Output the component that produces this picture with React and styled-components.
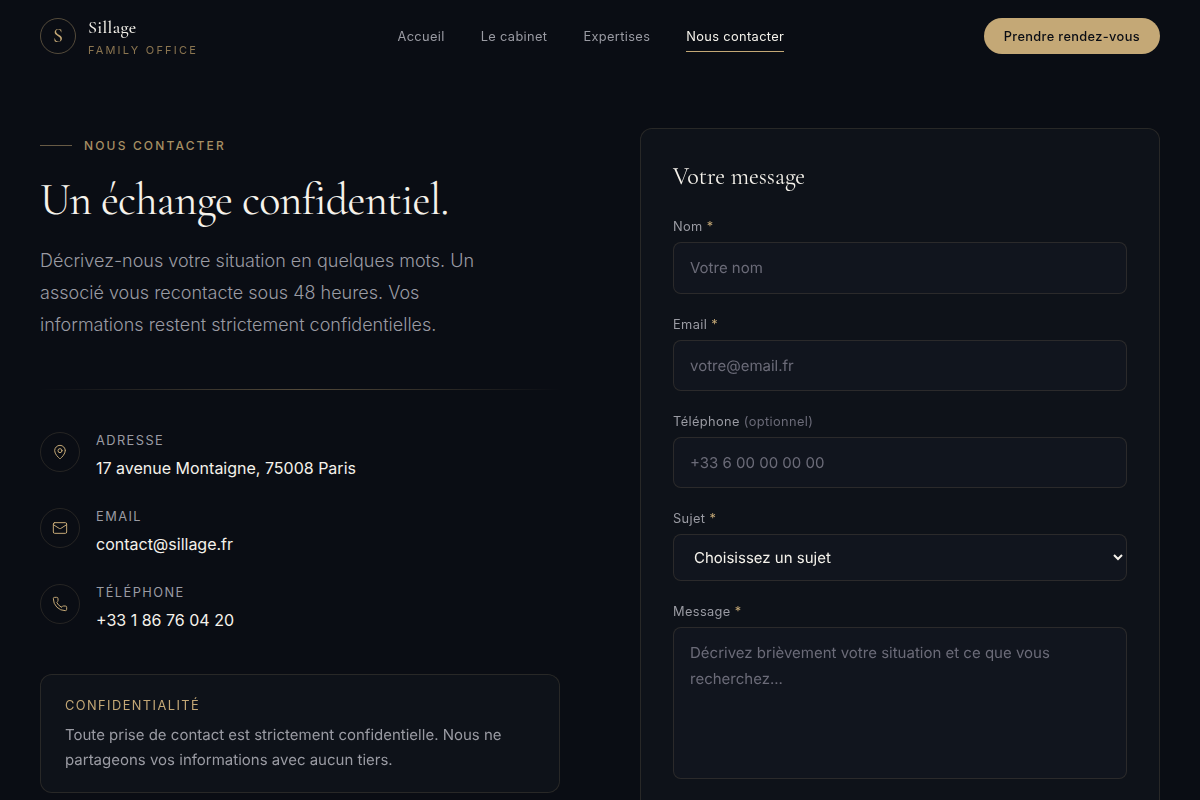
import React from 'react';
import styled, { createGlobalStyle } from 'styled-components';
import { MapPin, Mail, Phone } from 'lucide-react';

const serif = '"Cormorant Garamond", "Liberation Serif", serif';
const sans = 'Inter, "Liberation Sans", sans-serif';
const gold = '#c4a876';

const GlobalStyle = createGlobalStyle`
  *, *::before, *::after { box-sizing: border-box; }
  html { background: #0a0d14; }
  body {
    margin: 0;
    height: 800px;
    overflow: hidden;
    background: #0a0d14;
    color: #f5f2eb;
    font-family: ${sans};
    font-size: 16px;
    line-height: 1.7;
  }
  h1, h2, p { margin: 0; font-weight: 400; }
  a { color: inherit; text-decoration: none; }
`;

const Page = styled.div`
  height: 800px;
  overflow: hidden;
`;

const Header = styled.header`
  display: flex;
  align-items: center;
  justify-content: space-between;
  height: 72px;
  padding: 0 40px;
  will-change: transform;
`;

const Brand = styled.a`
  display: flex;
  align-items: center;
  gap: 12px;
`;

const Monogram = styled.span`
  display: flex;
  align-items: center;
  justify-content: center;
  width: 36px;
  height: 36px;
  border: 1px solid rgba(196, 168, 118, 0.4);
  border-radius: 50%;
  color: ${gold};
  font: 500 20px/1 ${serif};
`;

const BrandText = styled.span`
  display: flex;
  flex-direction: column;
  padding-top: 3px;
`;

const BrandName = styled.span`
  font: 500 18px/22px ${serif};
  letter-spacing: 0.36px;
`;

const BrandTag = styled.span`
  margin-top: 3px;
  color: #8b7550;
  font-size: 11px;
  line-height: 19px;
  letter-spacing: 2.2px;
  text-transform: uppercase;
`;

const Nav = styled.nav`
  display: flex;
  gap: 36px;
`;

const NavLink = styled.a`
  padding: 5px 0 3px;
  border-bottom: 1px solid ${(p) => (p.$active ? gold : 'transparent')};
  color: ${(p) => (p.$active ? '#f5f2eb' : '#9a9ba3')};
  font-size: 12.8px;
  line-height: 22px;
  letter-spacing: 0.365px;
`;

const BookButton = styled.a`
  display: flex;
  align-items: center;
  height: 36px;
  padding: 2px 20px 0;
  border-radius: 18px;
  background: ${gold};
  color: #0a0d14;
  font-size: 12.8px;
  font-weight: 500;
  letter-spacing: 0.365px;
`;

const Main = styled.main`
  display: grid;
  grid-template-columns: 1fr 1fr;
  gap: 80px;
  align-items: start;
  padding: 56px 40px 80px;
`;

const Intro = styled.section`
  display: flex;
  flex-direction: column;
  padding-top: 7px;
`;

const Eyebrow = styled.div`
  display: flex;
  align-items: center;
  gap: 12px;
  color: #a68f63;
  font-size: 12px;
  font-weight: 500;
  line-height: 21px;
  letter-spacing: 2.16px;
  text-transform: uppercase;

  &::before {
    content: '';
    width: 32px;
    height: 1px;
    background: ${gold};
    opacity: 0.5;
  }
`;

const Title = styled.h1`
  margin-top: 16px;
  font: 400 44px/56px ${serif};
  letter-spacing: -0.66px;
  white-space: nowrap;
`;

const Lead = styled.p`
  max-width: 460px;
  margin-top: 17px;
  color: #9a9ba3;
  font-size: 18px;
  font-weight: 300;
  line-height: 32px;
`;

const Divider = styled.div`
  height: 1px;
  margin: 48px 0 40px;
  background: linear-gradient(90deg, transparent, rgba(196, 168, 118, 0.4), transparent);
`;

const Contacts = styled.div`
  display: flex;
  flex-direction: column;
  gap: 24px;
`;

const ContactRow = styled.div`
  display: flex;
  gap: 16px;
  height: 52px;
`;

const ContactIcon = styled.span`
  display: flex;
  align-items: center;
  justify-content: center;
  width: 40px;
  height: 40px;
  margin-top: 2px;
  border: 1px solid rgba(196, 168, 118, 0.15);
  border-radius: 50%;
  color: ${gold};
`;

const ContactLabel = styled.div`
  margin-bottom: 4px;
  color: #9a9ba3;
  font-size: 12.8px;
  line-height: 21px;
  letter-spacing: 1.44px;
  text-transform: uppercase;
`;

const ContactValue = styled.div`
  line-height: 27px;
`;

const Notice = styled.aside`
  height: 119px;
  margin-top: 40px;
  padding: 20px 24px;
  border: 1px solid rgba(196, 168, 118, 0.15);
  border-radius: 12px;
  background: #0e1219;
  will-change: transform;
`;

const NoticeTitle = styled.div`
  margin-bottom: 6px;
  color: ${gold};
  font-size: 12.8px;
  line-height: 21px;
  letter-spacing: 1.44px;
  text-transform: uppercase;
`;

const NoticeText = styled.p`
  color: #9a9ba3;
  font-size: 15px;
  line-height: 25px;
  text-rendering: geometricPrecision;
`;

const FormCard = styled.form`
  display: flex;
  flex-direction: column;
  gap: 20px;
  height: 860px;
  padding: 32px;
  border: 1px solid rgba(196, 168, 118, 0.15);
  border-radius: 12px;
  background: #0e1219;
  will-change: transform;
`;

const FormTitle = styled.h2`
  margin-bottom: 4.3px;
  font: 400 24px/31px ${serif};
`;

const Field = styled.label`
  display: flex;
  flex-direction: column;
  gap: 5px;
  color: #9a9ba3;
  font-size: 12.8px;
  line-height: 21px;
  letter-spacing: 0.38px;
`;

const Required = styled.span`
  color: ${gold};
`;

const Optional = styled.span`
  color: #6b6b78;
`;

const controlStyle = `
  width: 100%;
  margin: 0;
  padding: 12px 16px;
  border: 1px solid rgba(196, 168, 118, 0.15);
  border-radius: 8px;
  outline: none;
  background: #11151e;
  color: #f5f2eb;
  font: 400 15px/25.5px ${sans};
  text-rendering: geometricPrecision;
  &::placeholder { color: #6b6b78; opacity: 1; }
`;

const Input = styled.input`
  ${controlStyle}
  height: 51.3px;
`;

const Select = styled.select`
  ${controlStyle}
  height: 46.9px;
`;

const TextArea = styled.textarea`
  ${controlStyle}
  height: 151.5px;
  resize: none;
`;

const contacts = [
  { Icon: MapPin, label: 'Adresse', value: '17 avenue Montaigne, 75008 Paris' },
  { Icon: Mail, label: 'Email', value: 'contact@sillage.fr' },
  { Icon: Phone, label: 'Téléphone', value: '+33 1 86 76 04 20' },
];

export default function App() {
  return (
    <Page>
      <GlobalStyle />
      <Header>
        <Brand href="#">
          <Monogram>S</Monogram>
          <BrandText>
            <BrandName>Sillage</BrandName>
            <BrandTag>Family Office</BrandTag>
          </BrandText>
        </Brand>
        <Nav>
          <NavLink href="#">Accueil</NavLink>
          <NavLink href="#">Le cabinet</NavLink>
          <NavLink href="#">Expertises</NavLink>
          <NavLink href="#" $active>Nous contacter</NavLink>
        </Nav>
        <BookButton href="#">Prendre rendez-vous</BookButton>
      </Header>
      <Main>
        <Intro>
          <Eyebrow>Nous contacter</Eyebrow>
          <Title>Un échange confidentiel.</Title>
          <Lead>
            Décrivez-nous votre situation en quelques mots. Un associé vous recontacte sous
            48 heures. Vos informations restent strictement confidentielles.
          </Lead>
          <Divider />
          <Contacts>
            {contacts.map(({ Icon, label, value }) => (
              <ContactRow key={label}>
                <ContactIcon><Icon size={16} strokeWidth={1.5} /></ContactIcon>
                <div>
                  <ContactLabel>{label}</ContactLabel>
                  <ContactValue>{value}</ContactValue>
                </div>
              </ContactRow>
            ))}
          </Contacts>
          <Notice>
            <NoticeTitle>Confidentialité</NoticeTitle>
            <NoticeText>
              Toute prise de contact est strictement confidentielle. Nous ne partageons vos
              informations avec aucun tiers.
            </NoticeText>
          </Notice>
        </Intro>
        <FormCard>
          <FormTitle>Votre message</FormTitle>
          <Field>
            <span>Nom <Required>*</Required></span>
            <Input type="text" placeholder="Votre nom" />
          </Field>
          <Field>
            <span>Email <Required>*</Required></span>
            <Input type="email" placeholder="votre@email.fr" />
          </Field>
          <Field>
            <span>Téléphone <Optional>(optionnel)</Optional></span>
            <Input type="tel" placeholder="+33 6 00 00 00 00" />
          </Field>
          <Field>
            <span>Sujet <Required>*</Required></span>
            <Select defaultValue="">
              <option value="">Choisissez un sujet</option>
            </Select>
          </Field>
          <Field>
            <span>Message <Required>*</Required></span>
            <TextArea placeholder="Décrivez brièvement votre situation et ce que vous recherchez..." />
          </Field>
        </FormCard>
      </Main>
    </Page>
  );
}
